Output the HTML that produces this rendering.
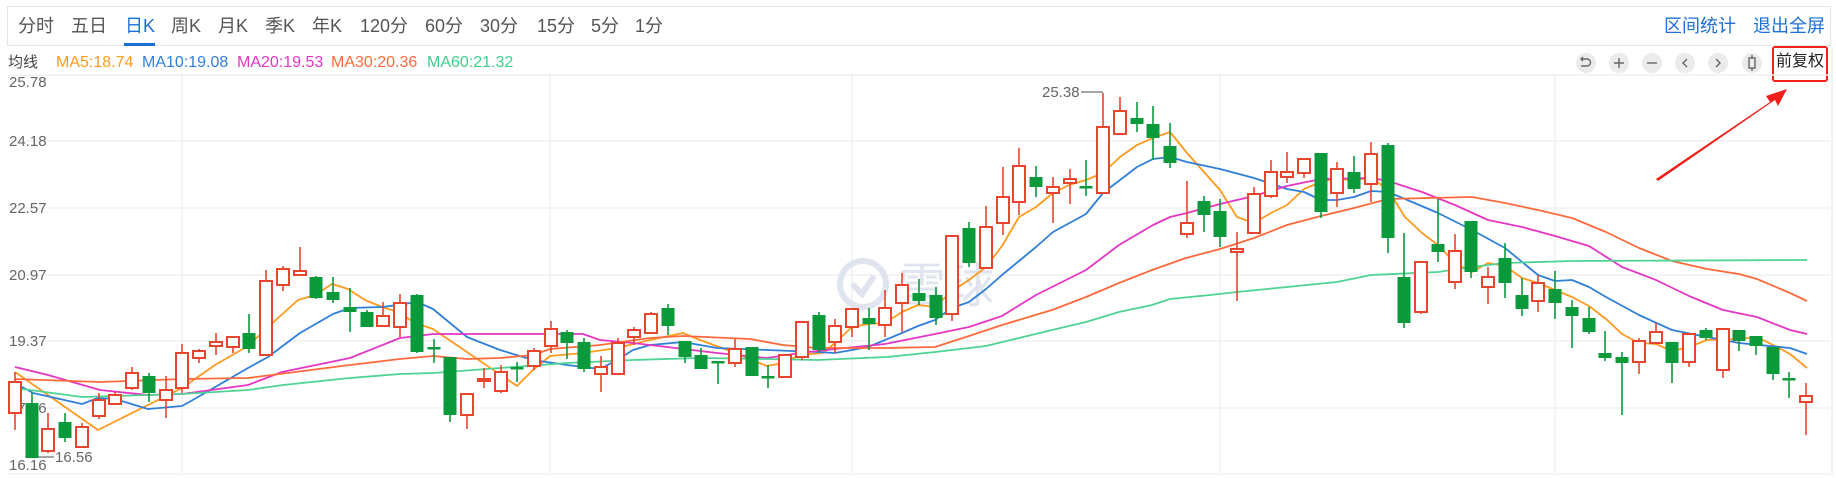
<!DOCTYPE html>
<html><head><meta charset="utf-8"><style>
html,body{margin:0;padding:0;background:#fff;}
body{width:1836px;height:478px;position:relative;overflow:hidden;font-family:"Liberation Sans","Noto Sans CJK SC",sans-serif;}
.hdr{position:absolute;left:7px;top:6px;width:1824px;height:40px;border:1px solid #e6e6e6;box-sizing:border-box;}
.t{position:absolute;top:15px;font-size:18px;line-height:22px;color:#555;white-space:nowrap;}
.m{position:absolute;top:53px;font-size:16px;line-height:20px;white-space:nowrap;}
</style></head><body>
<div class="hdr"></div>
<div class="t" style="left:18px">分时</div>
<div class="t" style="left:71px">五日</div>
<div class="t" style="left:125px;color:#1d6fd6">日K</div>
<div style="position:absolute;left:124px;top:43px;width:31px;height:3px;background:#1d6fd6"></div>
<div class="t" style="left:171px">周K</div>
<div class="t" style="left:218px">月K</div>
<div class="t" style="left:265px">季K</div>
<div class="t" style="left:312px">年K</div>
<div class="t" style="left:360px">120分</div>
<div class="t" style="left:425px">60分</div>
<div class="t" style="left:480px">30分</div>
<div class="t" style="left:537px">15分</div>
<div class="t" style="left:591px">5分</div>
<div class="t" style="left:635px">1分</div>
<div class="t" style="left:1664px;color:#1d6fd6">区间统计</div>
<div class="t" style="left:1753px;color:#1d6fd6">退出全屏</div>
<div class="m" style="left:8px;color:#444;font-size:15px">均线</div>
<div class="m" style="left:56px;color:#ff9a1f">MA5:18.74</div>
<div class="m" style="left:142px;color:#2f7fd8">MA10:19.08</div>
<div class="m" style="left:237px;color:#e436c4">MA20:19.53</div>
<div class="m" style="left:331px;color:#ff6a3d">MA30:20.36</div>
<div class="m" style="left:427px;color:#3fcf8c">MA60:21.32</div>
<div class="m" style="left:1776px;top:52px;color:#222">前复权</div>
<div style="position:absolute;left:1772px;top:46px;width:56px;height:36px;border:2px solid #f0201a;border-radius:3px;box-sizing:border-box"></div>
<svg width="1836" height="478" style="position:absolute;left:0;top:0" xmlns="http://www.w3.org/2000/svg">
<g stroke="#f1f1f1" stroke-width="1.5">
<path d="M8 75H1830M8 141H1830M8 208H1830M8 275H1830M8 341H1830M8 408H1830M8 474H1830"/>
<path d="M182 75V474M550 75V474M852 75V474M1220 75V474M1555 75V474M1832 47V476"/>
</g>
<g fill="#dfe4ee" stroke="#dfe4ee">
<circle cx="863" cy="284" r="23" fill="none" stroke-width="6"/>
<path d="M852 284l10 10l12-18" fill="none" stroke-width="6"/>
<text x="898" y="302" font-size="48" stroke="none" font-family="Noto Sans CJK SC,sans-serif">雪球</text>
</g>
<g font-size="15" fill="#666">
<text x="9" y="87">25.78</text><text x="9" y="146">24.18</text><text x="9" y="213">22.57</text><text x="9" y="280">20.97</text><text x="9" y="346">19.37</text><text x="9" y="413">17.76</text><text x="9" y="470">16.16</text>
<text x="55" y="462">16.56</text><text x="1042" y="97">25.38</text>
</g>
<path d="M37 457H54M1081 92H1103" stroke="#888" stroke-width="1.5" fill="none"/>
<g fill="none" stroke-width="1.8" stroke-linejoin="round">
<polyline stroke="#ff9a1f" points="15,372 98,430 182,388 215,365 248,346 267,328 298,300 315,295 332,284 348,289 365,300 382,307 398,312 415,323 433,329 517,386 533,370 550,356 583,353 617,348 650,340 683,333 700,340 733,352 767,366 783,363 800,355 823,353 835,343 852,327 868,324 885,323 902,312 918,305 935,307 952,291 969,280 986,267 1002,246 1019,217 1036,207 1053,193 1069,185 1086,180 1103,173 1120,157 1137,145 1153,138 1170,132 1187,153 1220,190 1237,217 1254,223 1271,213 1287,205 1304,189 1321,182 1337,178 1354,181 1371,177 1388,190 1405,217 1422,233 1438,245 1455,263 1472,272 1488,263 1505,266 1522,278 1538,283 1555,290 1572,297 1589,306 1606,319 1622,334 1639,343 1656,344 1672,351 1689,347 1707,340 1739,339 1757,337 1773,345 1790,354 1807,368"/>
<polyline stroke="#2f7fd8" points="15,383 33,393 82,404 98,398 115,399 148,409 182,406 198,397 248,368 268,357 300,333 333,314 350,308 383,307 417,302 433,309 467,337 500,350 533,360 567,365 600,369 617,360 633,350 650,345 683,342 717,348 767,350 817,352 835,353 852,350 868,347 902,333 918,326 935,320 952,308 969,302 986,289 1002,275 1019,261 1036,247 1053,232 1086,214 1103,193 1120,180 1137,167 1153,159 1170,157 1187,162 1220,169 1254,178 1287,189 1304,192 1321,200 1337,200 1354,197 1371,191 1388,192 1405,199 1438,213 1472,230 1505,248 1538,275 1555,281 1572,280 1589,287 1606,297 1639,315 1672,330 1707,337 1739,343 1790,348 1807,354"/>
<polyline stroke="#e436c4" points="15,367 48,375 100,390 148,395 182,394 248,385 282,372 350,358 400,338 433,334 583,334 600,340 633,343 667,347 717,353 767,358 800,353 835,349 885,344 935,334 969,327 1002,316 1036,295 1086,270 1119,245 1153,225 1170,217 1187,213 1220,204 1254,196 1287,186 1321,179 1371,178 1388,181 1422,192 1455,205 1488,220 1522,227 1555,236 1589,246 1622,267 1656,280 1689,296 1723,310 1757,317 1790,330 1807,334"/>
<polyline stroke="#ff6a3d" points="15,379 100,382 182,379 248,378 350,365 400,359 433,356 467,359 500,358 533,355 550,349 600,345 650,338 683,336 750,339 783,345 817,348 885,348 935,347 969,336 1002,325 1052,310 1086,297 1119,283 1152,270 1186,258 1220,249 1254,238 1287,225 1321,216 1354,208 1388,199 1472,197 1505,203 1538,210 1572,218 1606,232 1639,248 1672,261 1707,269 1739,274 1757,279 1790,293 1807,301"/>
<polyline stroke="#4fd394" points="15,388 82,397 182,394 248,390 283,385 350,378 400,374 433,373 500,368 567,363 633,360 700,358 767,359 817,360 887,357 935,352 986,346 1019,338 1052,330 1086,322 1119,312 1152,305 1170,299 1210,295 1237,292 1287,287 1337,282 1371,275 1438,272 1472,267 1505,263 1572,261 1807,260"/>
</g>
<path stroke="#0a9a3b" stroke-width="1.6" fill="none" d="M32 393V458M65 413V442M149 373V402M249 314V353M316 276V299M333 277V303M350 288V332M367 310V327M417 294V353M434 339V363M450 357V422M517 362V382M567 330V359M584 338V372M668 304V335M685 341V363M701 348V369M718 361V384M752 347V376M768 365V388M819 312V352M869 308V350M919 279V305M936 287V325M969 222V267M1036 166V197M1086 160V196M1137 102V132M1153 106V160M1170 123V168M1204 196V232M1220 199V247M1321 153V218M1354 156V193M1388 143V253M1404 233V328M1438 199V262M1471 221V278M1505 243V298M1522 278V316M1555 271V319M1572 300V348M1589 307V334M1605 331V361M1622 352V415M1672 342V383M1706 328V340M1739 330V351M1756 336V355M1773 347V380M1789 372V398"/>
<g fill="#0a9a3b">
<rect x="25.5" y="403" width="13" height="55"/><rect x="58.5" y="422" width="13" height="16"/><rect x="142.5" y="376" width="13" height="17"/><rect x="242.5" y="333" width="13" height="16"/><rect x="309.5" y="277" width="13" height="21"/><rect x="326.5" y="292" width="13" height="8"/><rect x="343.5" y="307" width="13" height="5"/><rect x="360.5" y="312" width="13" height="15"/><rect x="410.5" y="295" width="13" height="57"/><rect x="427.5" y="347" width="13" height="2.5"/><rect x="443.5" y="357" width="13" height="58"/><rect x="510.5" y="367" width="13" height="2.5"/><rect x="560.5" y="332" width="13" height="11"/><rect x="577.5" y="342" width="13" height="27"/><rect x="661.5" y="308" width="13" height="18"/><rect x="678.5" y="341" width="13" height="16"/><rect x="694.5" y="355" width="13" height="14"/><rect x="711.5" y="361" width="13" height="2.5"/><rect x="745.5" y="347" width="13" height="29"/><rect x="761.5" y="376" width="13" height="2.5"/><rect x="812.5" y="315" width="13" height="35"/><rect x="862.5" y="318" width="13" height="6"/><rect x="912.5" y="293" width="13" height="8"/><rect x="929.5" y="295" width="13" height="23"/><rect x="962.5" y="228" width="13" height="35"/><rect x="1029.5" y="177" width="13" height="10"/><rect x="1079.5" y="186" width="13" height="2.5"/><rect x="1130.5" y="118" width="13" height="6"/><rect x="1146.5" y="124" width="13" height="14"/><rect x="1163.5" y="146" width="13" height="17"/><rect x="1197.5" y="201" width="13" height="14"/><rect x="1213.5" y="211" width="13" height="26"/><rect x="1314.5" y="153" width="13" height="59"/><rect x="1347.5" y="172" width="13" height="17"/><rect x="1381.5" y="145" width="13" height="93"/><rect x="1397.5" y="277" width="13" height="46"/><rect x="1431.5" y="244" width="13" height="8"/><rect x="1464.5" y="221" width="13" height="51"/><rect x="1498.5" y="258" width="13" height="25"/><rect x="1515.5" y="295" width="13" height="14"/><rect x="1548.5" y="289" width="13" height="14"/><rect x="1565.5" y="307" width="13" height="9"/><rect x="1582.5" y="318" width="13" height="14"/><rect x="1598.5" y="353" width="13" height="5"/><rect x="1615.5" y="357" width="13" height="6"/><rect x="1665.5" y="342" width="13" height="21"/><rect x="1699.5" y="330" width="13" height="8"/><rect x="1732.5" y="330" width="13" height="11"/><rect x="1749.5" y="336" width="13" height="10"/><rect x="1766.5" y="347" width="13" height="27"/><rect x="1782.5" y="378" width="13" height="2.5"/>
</g>
<path stroke="#e8452f" stroke-width="1.6" fill="none" d="M15 372V430M48 413V453M82 423V448M99 393V419M115 392V405M132 367V390M166 376V418M182 344V393M199 349V363M216 333V355M233 336V353M266 270V355M283 266V291M300 247V275M383 302V327M400 294V337M467 393V429M484 368V388M501 365V393M534 348V370M551 321V353M601 356V392M618 338V374M634 327V345M651 312V334M735 339V367M785 355V377M802 322V360M835 319V353M852 309V337M885 290V337M902 273V332M952 236V321M986 206V268M1003 167V235M1019 148V215M1053 177V223M1070 169V204M1103 93V193M1120 97V134M1187 181V238M1237 232V301M1254 187V233M1271 160V198M1287 152V183M1304 158V178M1337 162V207M1371 142V202M1421 262V314M1455 234V289M1488 267V304M1538 275V312M1639 338V374M1656 323V343M1689 334V367M1723 328V378M1806 383V435"/>
<g fill="#fff" stroke="#e8452f" stroke-width="2">
<rect x="9" y="382" width="12" height="31"/><rect x="42" y="429" width="12" height="22"/><rect x="76" y="427" width="12" height="20"/><rect x="93" y="400" width="12" height="16"/><rect x="109" y="395" width="12" height="9"/><rect x="126" y="373" width="12" height="15"/><rect x="160" y="390" width="12" height="10"/><rect x="176" y="353" width="12" height="35"/><rect x="193" y="351" width="12" height="7"/><rect x="210" y="342" width="12" height="4"/><rect x="227" y="337" width="12" height="10"/><rect x="260" y="281" width="12" height="74"/><rect x="277" y="269" width="12" height="16"/><rect x="294" y="271" width="12" height="4"/><rect x="377" y="316" width="12" height="10"/><rect x="394" y="303" width="12" height="24"/><rect x="461" y="394" width="12" height="21"/><rect x="478" y="379" width="12" height="2"/><rect x="495" y="372" width="12" height="19"/><rect x="528" y="351" width="12" height="15"/><rect x="545" y="329" width="12" height="17"/><rect x="595" y="367" width="12" height="7"/><rect x="612" y="343" width="12" height="31"/><rect x="628" y="330" width="12" height="7"/><rect x="645" y="314" width="12" height="19"/><rect x="729" y="349" width="12" height="14"/><rect x="779" y="355" width="12" height="22"/><rect x="796" y="322" width="12" height="35"/><rect x="829" y="326" width="12" height="16"/><rect x="846" y="309" width="12" height="18"/><rect x="879" y="308" width="12" height="17"/><rect x="896" y="285" width="12" height="18"/><rect x="946" y="236" width="12" height="78"/><rect x="980" y="227" width="12" height="41"/><rect x="997" y="197" width="12" height="26"/><rect x="1013" y="166" width="12" height="36"/><rect x="1047" y="187" width="12" height="6"/><rect x="1064" y="179" width="12" height="4"/><rect x="1097" y="127" width="12" height="66"/><rect x="1114" y="111" width="12" height="23"/><rect x="1181" y="223" width="12" height="11"/><rect x="1231" y="249" width="12" height="3"/><rect x="1248" y="194" width="12" height="39"/><rect x="1265" y="172" width="12" height="24"/><rect x="1281" y="172" width="12" height="5"/><rect x="1298" y="159" width="12" height="14"/><rect x="1331" y="169" width="12" height="24"/><rect x="1365" y="154" width="12" height="30"/><rect x="1415" y="262" width="12" height="50"/><rect x="1449" y="251" width="12" height="31"/><rect x="1482" y="277" width="12" height="10"/><rect x="1532" y="283" width="12" height="18"/><rect x="1633" y="341" width="12" height="21"/><rect x="1650" y="332" width="12" height="11"/><rect x="1683" y="334" width="12" height="28"/><rect x="1717" y="329" width="12" height="41"/><rect x="1800" y="396" width="12" height="6"/>
</g>
<g fill="#ebebeb">
<circle cx="1586" cy="63" r="10"/><circle cx="1619" cy="63" r="10"/><circle cx="1652" cy="63" r="10"/><circle cx="1685" cy="63" r="10"/><circle cx="1718" cy="63" r="10"/><circle cx="1752" cy="63" r="10"/>
</g>
<g fill="none" stroke="#666" stroke-width="1.4">
<path d="M1581 59h6a3.5 3.5 0 0 1 0 7h-6M1583 57l-2 2l2 2"/>
<path d="M1614 63h10M1619 58v10"/>
<path d="M1647 63h10"/>
<path d="M1687 59l-4 4l4 4"/>
<path d="M1716 59l4 4l-4 4"/>
<rect x="1749" y="58" width="6" height="10"/><path d="M1752 55v3M1752 68v3"/>
</g>
<path fill="#f0201a" d="M1656 179L1770 102L1766 96L1787 89L1778 106L1775 100L1658 181Z"/>
</svg>
</body></html>
